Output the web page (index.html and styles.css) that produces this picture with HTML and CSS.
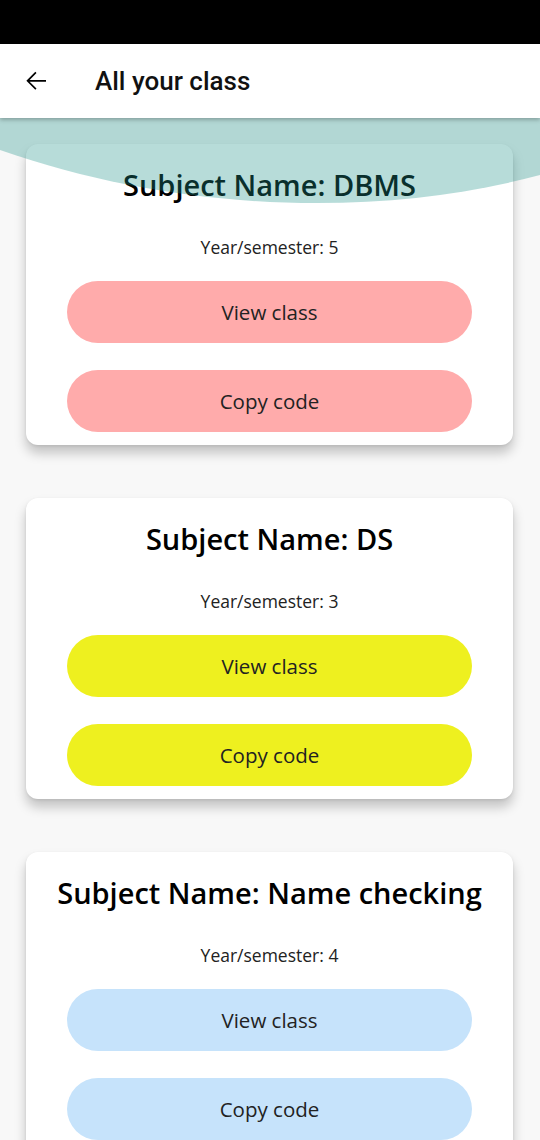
FILE: index.html
```html
<!DOCTYPE html>
<html>
<head>
<meta charset="utf-8">
<link rel="stylesheet" href="styles.css">
</head>
<body>
<div class="status"></div>
<header class="appbar">
  <svg class="back" width="30" height="30" viewBox="0 0 24 24"><path d="M20 11.1H6.9l5.5-5.5-0.95-0.95L4.3 11.8l7.15 7.15 0.95-0.95-5.5-5.5H20z" fill="#000"/></svg>
  <h1 class="apptitle">All your class</h1>
</header>
<main class="content">
  <svg class="wave" width="540" height="100" viewBox="0 0 540 100" preserveAspectRatio="none"><path d="M0 0H540V57C380 100 180 95 0 32Z" fill="rgba(31,147,137,0.32)"/></svg>
  <section class="card">
    <h2 class="subject">Subject Name: DBMS</h2>
    <p class="year">Year/semester: 5</p>
    <button class="btn pink">View class</button>
    <button class="btn pink">Copy code</button>
  </section>
  <section class="card">
    <h2 class="subject">Subject Name: DS</h2>
    <p class="year">Year/semester: 3</p>
    <button class="btn yellow">View class</button>
    <button class="btn yellow">Copy code</button>
  </section>
  <section class="card">
    <h2 class="subject">Subject Name: Name checking</h2>
    <p class="year">Year/semester: 4</p>
    <button class="btn blue">View class</button>
    <button class="btn blue">Copy code</button>
  </section>
</main>
</body>
</html>
```
FILE: styles.css
```css
html, body {
  margin: 0;
  padding: 0;
}
body {
  width: 540px;
  height: 1140px;
  overflow: hidden;
  background: #f8f8f8;
  font-family: "Open Sans", "Noto Sans", sans-serif;
}
.status {
  height: 44px;
  background: #000;
}
.appbar {
  height: 74px;
  background: #fff;
  display: flex;
  align-items: center;
  box-shadow: 0 2px 4px rgba(0,0,0,0.25);
  position: relative;
  z-index: 3;
}
.back {
  margin-left: 21px;
  width: 30px;
  height: 30px;
}
.apptitle {
  margin: 0 0 0 44px;
  font-family: "Roboto", sans-serif;
  font-weight: 500;
  font-size: 26px;
  color: #111;
}
.content {
  position: relative;
  padding: 26px 27px 0 26px;
  display: flex;
  flex-direction: column;
  gap: 53px;
}
.wave {
  position: absolute;
  top: 0;
  left: 0;
  z-index: 2;
  pointer-events: none;
}
.card {
  background: #fff;
  border-radius: 12px;
  padding: 23px 41px 13px;
  display: flex;
  flex-direction: column;
  box-shadow: 0 8px 12px rgba(0,0,0,0.22), 0 1px 3px rgba(0,0,0,0.08);
}
.subject {
  margin: 0 -30px;
  height: 36px;
  line-height: 36px;
  text-align: center;
  font-size: 29px;
  font-weight: 600;
  color: #000;
  white-space: nowrap;
}
.year {
  margin: 34px 0 0;
  height: 20px;
  line-height: 20px;
  text-align: center;
  font-size: 17.5px;
  color: #222;
}
.btn {
  margin-top: 24px;
  height: 62px;
  border: none;
  border-radius: 31px;
  font-family: inherit;
  font-size: 20.5px;
  color: #222;
}
.btn + .btn {
  margin-top: 27px;
}
.pink { background: #ffabab; }
.yellow { background: #eef01f; }
.blue { background: #c6e3fb; }
```
